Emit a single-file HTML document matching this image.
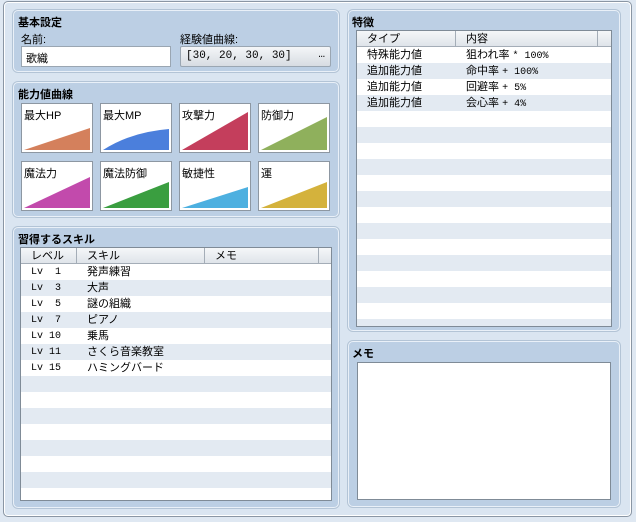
<!DOCTYPE html>
<html><head><meta charset="utf-8"><style>
*{box-sizing:border-box;margin:0;padding:0}
body{width:636px;height:522px;background:#dfe8f2;font-family:"Liberation Sans","Noto Sans CJK JP",sans-serif;font-size:11px;color:#000;position:relative;overflow:hidden}
.abs{position:absolute}
.outer{left:3px;top:1px;width:629px;height:516px;border:1px solid #8a96a4;border-radius:5px;background:#dae5f1;box-shadow:inset 0 0 0 1px #fff}
.grp{position:absolute;background:#bccfe4;border:1px solid #e9f0f8;border-radius:5px;box-shadow:0 0 0 1px #b3c4d6}
.gt{position:absolute;left:4px;top:3px;font-weight:bold;font-size:11px}
.lbl{position:absolute;font-size:11px}
.input{background:#fff;border:1px solid #9aa6b2}
.btn{background:linear-gradient(#f4f6f8,#d7dce2);border:1px solid #9aa6b2;border-radius:2px;font-family:"Liberation Mono","Noto Sans CJK JP",monospace}
.cv{position:absolute;width:72px;height:50px;background:#fff;border:1px solid #8d97a2}
.cv span{position:absolute;left:2px;top:3px;font-size:11px}
.cv svg{position:absolute;left:0;top:0}
.tbl{position:absolute;background:#fff;border:1px solid #7f8b97;overflow:hidden}
.hd{position:absolute;left:0;top:0;height:16px;width:100%;background:linear-gradient(#f5f7f9,#dfe4ea);border-bottom:1px solid #a4adb7}
.hd div{position:absolute;top:0;height:15px;border-right:1px solid #a4adb7;padding-left:10px;line-height:16px;font-size:11px}
.row{position:absolute;left:0;width:100%;height:16px}
.mono{font-family:"Liberation Mono","Noto Sans CJK JP",monospace;font-size:10px}
.ln{height:16px;line-height:17px;white-space:pre}
</style></head><body>
<div class="abs outer"></div>

<div class="grp" style="left:13px;top:10px;width:326px;height:62px">
<div class="gt">基本設定</div>
<div class="lbl" style="left:7px;top:20px">名前:</div>
<div class="lbl" style="left:166px;top:20px">経験値曲線:</div>
</div>
<div class="abs input" style="left:21px;top:46px;width:150px;height:21px;padding:3px 4px;font-size:11px">歌織</div>
<div class="abs btn" style="left:180px;top:46px;width:151px;height:21px;padding:3px 5px;font-size:11px">[30, 20, 30, 30]<span style="position:absolute;right:5px;top:2px">…</span></div>

<div class="grp" style="left:13px;top:82px;width:326px;height:135px">
<div class="gt">能力値曲線</div>
</div>
<div class="cv" style="left:21px;top:103px"><span>最大HP</span><svg width="70" height="48"><polygon points="2,46 68,24 68,46" fill="#d4805c"/></svg></div>
<div class="cv" style="left:100px;top:103px"><span>最大MP</span><svg width="70" height="48"><path d="M2,46 Q30,28 68,25 L68,46Z" fill="#4b7fdc"/></svg></div>
<div class="cv" style="left:179px;top:103px"><span>攻撃力</span><svg width="70" height="48"><polygon points="2,46 68,8 68,46" fill="#c43e5c"/></svg></div>
<div class="cv" style="left:258px;top:103px"><span>防御力</span><svg width="70" height="48"><polygon points="2,46 68,13 68,46" fill="#8fb05c"/></svg></div>
<div class="cv" style="left:21px;top:161px"><span>魔法力</span><svg width="70" height="48"><polygon points="2,46 68,15 68,46" fill="#c24aac"/></svg></div>
<div class="cv" style="left:100px;top:161px"><span>魔法防御</span><svg width="70" height="48"><polygon points="2,46 68,20 68,46" fill="#3a9e40"/></svg></div>
<div class="cv" style="left:179px;top:161px"><span>敏捷性</span><svg width="70" height="48"><polygon points="2,46 68,25 68,46" fill="#4db0e0"/></svg></div>
<div class="cv" style="left:258px;top:161px"><span>運</span><svg width="70" height="48"><polygon points="2,46 68,20 68,46" fill="#d4b23c"/></svg></div>

<div class="grp" style="left:13px;top:227px;width:326px;height:281px">
<div class="gt">習得するスキル</div>
</div>
<div class="tbl" style="left:20px;top:247px;width:312px;height:254px">
<div class="hd"><div style="left:0;width:56px">レベル</div><div style="left:56px;width:128px">スキル</div><div style="left:184px;width:114px">メモ</div></div>
<div style="position:absolute;left:0;top:16px;width:100%">
<div class="row" style="top:16px;background:#e3eaf2"></div>
<div class="row" style="top:48px;background:#e3eaf2"></div>
<div class="row" style="top:80px;background:#e3eaf2"></div>
<div class="row" style="top:112px;background:#e3eaf2"></div>
<div class="row" style="top:144px;background:#e3eaf2"></div>
<div class="row" style="top:176px;background:#e3eaf2"></div>
<div class="row" style="top:208px;background:#e3eaf2"></div>
</div>
<div style="position:absolute;left:10px;top:16px" class="mono">
<div class="ln">Lv  1</div><div class="ln">Lv  3</div><div class="ln">Lv  5</div><div class="ln">Lv  7</div><div class="ln">Lv 10</div><div class="ln">Lv 11</div><div class="ln">Lv 15</div>
</div>
<div style="position:absolute;left:66px;top:16px">
<div class="ln">発声練習</div><div class="ln">大声</div><div class="ln">謎の組織</div><div class="ln">ピアノ</div><div class="ln">乗馬</div><div class="ln">さくら音楽教室</div><div class="ln">ハミングバード</div>
</div>
</div>

<div class="grp" style="left:348px;top:10px;width:272px;height:321px">
<div class="gt" style="left:3px">特徴</div>
</div>
<div class="tbl" style="left:356px;top:30px;width:256px;height:297px">
<div class="hd"><div style="left:0;width:99px">タイプ</div><div style="left:99px;width:142px">内容</div></div>
<div style="position:absolute;left:0;top:16px;width:100%">
<div class="row" style="top:16px;background:#e3eaf2"></div>
<div class="row" style="top:48px;background:#e3eaf2"></div>
<div class="row" style="top:80px;background:#e3eaf2"></div>
<div class="row" style="top:112px;background:#e3eaf2"></div>
<div class="row" style="top:144px;background:#e3eaf2"></div>
<div class="row" style="top:176px;background:#e3eaf2"></div>
<div class="row" style="top:208px;background:#e3eaf2"></div>
<div class="row" style="top:240px;background:#e3eaf2"></div>
<div class="row" style="top:272px;background:#e3eaf2"></div>
</div>
<div style="position:absolute;left:10px;top:16px"><div class="ln">特殊能力値</div><div class="ln">追加能力値</div><div class="ln">追加能力値</div><div class="ln">追加能力値</div></div>
<div style="position:absolute;left:109px;top:16px"><div class="ln">狙われ率 <span class="mono">* 100%</span></div><div class="ln">命中率 <span class="mono">+ 100%</span></div><div class="ln">回避率 <span class="mono">+ 5%</span></div><div class="ln">会心率 <span class="mono">+ 4%</span></div></div>
</div>

<div class="grp" style="left:348px;top:341px;width:272px;height:166px">
<div class="gt" style="left:3px">メモ</div>
</div>
<div class="abs input" style="left:357px;top:362px;width:254px;height:138px;border-color:#7f8b97"></div>
</body></html>
